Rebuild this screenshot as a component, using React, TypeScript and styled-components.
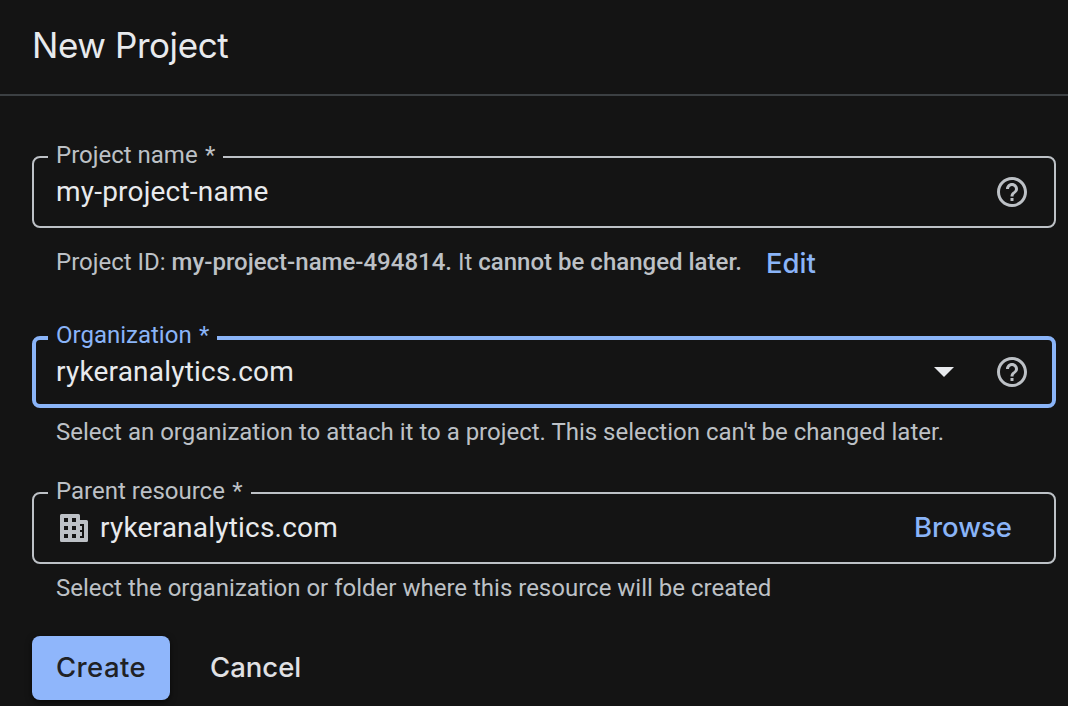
import React from "react";
import styled, { createGlobalStyle } from "styled-components";

const GlobalStyle = createGlobalStyle`
  * { box-sizing: border-box; }
  body {
    margin: 0;
    background: #141414;
    color: #e8eaed;
    font-family: Roboto, "Liberation Sans", sans-serif;
    overflow: hidden;
  }
`;

const Page = styled.main`
  height: 706px;
  display: flex;
  flex-direction: column;
  background: #141414;
`;

const Header = styled.header`
  height: 96px;
  flex: none;
  padding: 23px 32px 0;
  border-bottom: 2px solid #3c4043;
`;

const Title = styled.h1`
  margin: 0;
  font: 400 35px/44px Inter, sans-serif;
  letter-spacing: -0.42px;
`;

const Form = styled.form`
  display: flex;
  flex-direction: column;
  padding: 47px 12px 0 32px;
`;

const Field = styled.fieldset<{ $focused?: boolean; $top?: number }>`
  margin: ${(p) => p.$top ?? 0}px 0 0;
  min-width: 0;
  height: ${(p) => (p.$focused ? 84 : 85)}px;
  padding: 0 ${(p) => (p.$focused ? 12 : 14)}px;
  border: ${(p) => (p.$focused ? "4px solid #8ab4f8" : "2px solid #bdc1c6")};
  border-radius: 8px;
  color: ${(p) => (p.$focused ? "#8ab4f8" : "#bdc1c6")};
`;

const Legend = styled.legend<{ $focused?: boolean }>`
  height: 28px;
  padding: 0 8px;
  font-size: 24px;
  line-height: ${(p) => (p.$focused ? 22 : 24)}px;
`;

const Required = styled.span`
  margin-left: 1.4px;
`;

const FieldRow = styled.div<{ $focused?: boolean }>`
  height: ${(p) => (p.$focused ? 64 : 68)}px;
  margin-top: ${(p) => (p.$focused ? -12 : -13)}px;
  padding: 0 8px;
  display: flex;
  align-items: center;
`;

const Value = styled.span`
  flex: 1;
  color: #e8eaed;
  font-size: 28px;
  line-height: 40px;
  letter-spacing: 0.2px;
`;

const Hint = styled.div<{ $gap: number }>`
  display: flex;
  align-items: center;
  height: 32px;
  margin: ${(p) => p.$gap}px 0 0 24px;
  color: #bdc1c6;
  font-size: 24px;
  line-height: 32px;
  white-space: pre;

  b { font-weight: 500; }
`;

const LinkButton = styled.button`
  padding: 0;
  border: 0;
  background: none;
  color: #8ab4f8;
  font: 500 27.5px/36px Inter, sans-serif;
`;

const EditButton = styled(LinkButton)`
  margin: 2px 0 0 24px;
`;

const BrowseButton = styled(LinkButton)`
  margin: 0 20px 2px 0;
`;

const Actions = styled.div`
  display: flex;
  gap: 16px;
  margin-top: 32px;
`;

const ActionButton = styled.button<{ $primary?: boolean }>`
  height: 64px;
  padding: 0 24px 2px;
  border: 0;
  border-radius: 8px;
  background: ${(p) => (p.$primary ? "#8fb6fb" : "transparent")};
  box-shadow: ${(p) => (p.$primary ? "0 2px 6px rgba(0, 0, 0, 0.6)" : "none")};
  color: ${(p) => (p.$primary ? "#202124" : "#e0e1e4")};
  font: 500 27.5px/62px Inter, sans-serif;
  letter-spacing: ${(p) => (p.$primary ? 0.4 : 0)}px;
`;

const HelpIcon = styled.svg`
  width: 36px;
  height: 36px;
  margin-right: 2px;
  fill: #bdc1c6;
`;

const Caret = styled.svg`
  width: 20px;
  height: 10px;
  margin-right: 40px;
  fill: #e8eaed;
`;

const BuildingIcon = styled.svg`
  width: 28px;
  height: 28px;
  margin: 0 12px 0 4px;
  fill: #bdc1c6;
`;

const Help = () => (
  <HelpIcon viewBox="0 0 24 24">
    <path d="M11 18h2v-2h-2v2zm1-16C6.48 2 2 6.48 2 12s4.48 10 10 10 10-4.48 10-10S17.52 2 12 2zm0 18c-4.41 0-8-3.59-8-8s3.59-8 8-8 8 3.59 8 8-3.59 8-8 8zm0-14c-2.21 0-4 1.79-4 4h2c0-1.1.9-2 2-2s2 .9 2 2c0 2-3 1.75-3 5h2c0-2.25 3-2.5 3-5 0-2.21-1.79-4-4-4z" />
  </HelpIcon>
);

const Building = () => (
  <BuildingIcon viewBox="0 0 28 28">
    <path
      fillRule="evenodd"
      d="M1.5 0H18.5Q20 0 20 1.5V6H26.5Q28 6 28 7.5V26.5Q28 28 26.5 28H1.5Q0 28 0 26.5V1.5Q0 0 1.5 0ZM4 4V8H8V4ZM12 4V8H16V4ZM4 12V16H8V12ZM12 12V16H16V12ZM4 20V24H8V20ZM12 20V24H16V20ZM20 10V12H22V16H20V18H22V22H20V24H24V10Z"
    />
  </BuildingIcon>
);

export default function App() {
  return (
    <Page>
      <GlobalStyle />
      <Header>
        <Title>New Project</Title>
      </Header>
      <Form onSubmit={(e) => e.preventDefault()}>
        <Field>
          <Legend>
            Project name <Required>*</Required>
          </Legend>
          <FieldRow>
            <Value>my-project-name</Value>
            <Help />
          </FieldRow>
        </Field>
        <Hint $gap={18}>
          <span>
            Project ID: <b>my-project-name-494814.</b> It <b>cannot be changed later.</b>
          </span>
          <EditButton type="button">Edit</EditButton>
        </Hint>
        <Field $focused $top={46}>
          <Legend $focused>
            Organization <Required>*</Required>
          </Legend>
          <FieldRow $focused>
            <Value>rykeranalytics.com</Value>
            <Caret viewBox="0 0 20 10">
              <path d="M0 0H20L10 10Z" />
            </Caret>
            <Help />
          </FieldRow>
        </Field>
        <Hint $gap={8}>Select an organization to attach it to a project. This selection can't be changed later.</Hint>
        <Field $top={31}>
          <Legend>
            Parent resource <Required>*</Required>
          </Legend>
          <FieldRow>
            <Building />
            <Value>rykeranalytics.com</Value>
            <BrowseButton type="button">Browse</BrowseButton>
          </FieldRow>
        </Field>
        <Hint $gap={8}>Select the organization or folder where this resource will be created</Hint>
        <Actions>
          <ActionButton $primary>Create</ActionButton>
          <ActionButton type="button">Cancel</ActionButton>
        </Actions>
      </Form>
    </Page>
  );
}
